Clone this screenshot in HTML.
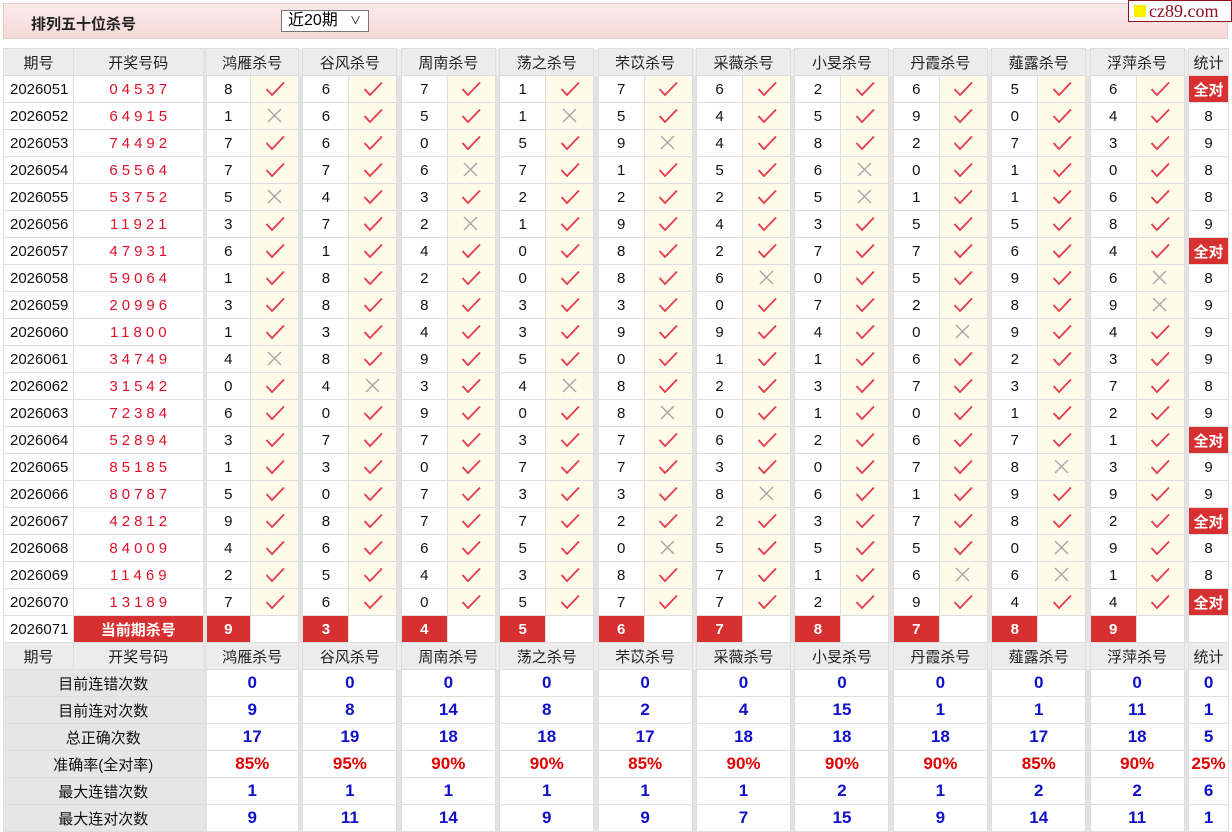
<!DOCTYPE html>
<html><head><meta charset="utf-8">
<style>
*{margin:0;padding:0;box-sizing:border-box}
body{width:1232px;height:832px;background:#fff;font-family:"Liberation Sans","Noto Sans CJK SC",sans-serif;position:relative;overflow:hidden}
.bar{position:absolute;left:3px;top:3px;width:1225px;height:36px;background:linear-gradient(#fbeaea,#f6d9d9);border:1px solid #e2cccc}
.title{position:absolute;left:27px;top:9px;font-size:15px;font-weight:bold;color:#222}
.sel{position:absolute;left:277px;top:6px;width:88px;height:22px;border:1px solid #777;background:#fff;font-size:16px;padding-left:6px;line-height:20px;color:#000}
.sel span{position:absolute;right:7px;top:0;font-size:11px}
.logo{position:absolute;left:1128px;top:0;width:104px;height:22px;background:#fff;border:1px solid #8b1020;font-family:"Liberation Serif",serif;font-size:18px;color:#8b1020;line-height:20px;padding-left:20px}
.logo:before{content:"";position:absolute;left:5px;top:4px;width:12px;height:12px;background:#ffee00}
table{position:absolute;left:3px;top:48px;border-collapse:collapse;table-layout:fixed;width:1225px}
td{height:27px;border:1px solid #dedede;text-align:center;font-size:15px;color:#111;padding:0;white-space:nowrap}
tr:not(.st) td:nth-child(2),td.lb{border-right:4px solid #e2e2e2}
tr.h td{background:#ececec;color:#222}
td.s{background:#e2e2e2;border-top:none;border-bottom:none}
td.q{text-align:left;padding-left:6px}
td.r{color:#e0102a;letter-spacing:4px;padding-left:4px}
td.c{background:#fffbea}
td.a{background:#d63030;color:#fff;font-weight:bold}
td.lb{background:#e6e6e6}
td.b{color:#1010c8;font-weight:bold;font-size:17px}
td.p{color:#e00000;font-weight:bold;font-size:17px}
svg{display:block;margin:auto}
</style></head><body>
<svg width="0" height="0" style="position:absolute"><defs>
<symbol id="k" viewBox="0 0 22 18"><path d="M2.5 9 L8 15 L20 2.5" fill="none" stroke="#e5404f" stroke-width="1.9"/></symbol>
<symbol id="x" viewBox="0 0 22 18"><path d="M4 2 L17 15 M17 2 L4 15" fill="none" stroke="#aaa" stroke-width="1.5"/></symbol>
</defs></svg>
<div class="bar"><div class="title">排列五十位杀号</div><div class="sel">近20期<span>&#x2228;</span></div></div>
<div class="logo">cz89.com</div>
<table>
<colgroup><col style="width:70px"><col style="width:131px">
<col style="width:46px"><col style="width:48px"><col style="width:4.4px">
<col style="width:46px"><col style="width:48px"><col style="width:4.4px">
<col style="width:46px"><col style="width:48px"><col style="width:4.4px">
<col style="width:46px"><col style="width:48px"><col style="width:4.4px">
<col style="width:46px"><col style="width:48px"><col style="width:4.4px">
<col style="width:46px"><col style="width:48px"><col style="width:4.4px">
<col style="width:46px"><col style="width:48px"><col style="width:4.4px">
<col style="width:46px"><col style="width:48px"><col style="width:4.4px">
<col style="width:46px"><col style="width:48px"><col style="width:4.4px">
<col style="width:46px"><col style="width:48px"><col style="width:4.4px">
<col style="width:40px"></colgroup>
<tr class="h"><td>期号</td><td>开奖号码</td><td colspan="2">鸿雁杀号</td><td class="s"></td><td colspan="2">谷风杀号</td><td class="s"></td><td colspan="2">周南杀号</td><td class="s"></td><td colspan="2">荡之杀号</td><td class="s"></td><td colspan="2">芣苡杀号</td><td class="s"></td><td colspan="2">采薇杀号</td><td class="s"></td><td colspan="2">小旻杀号</td><td class="s"></td><td colspan="2">丹霞杀号</td><td class="s"></td><td colspan="2">薤露杀号</td><td class="s"></td><td colspan="2">浮萍杀号</td><td class="s"></td><td>统计</td></tr>
<tr><td class="q">2026051</td><td class="r">04537</td><td>8</td><td class="c"><svg width="22" height="18"><use href="#k"/></svg></td><td class="s"></td><td>6</td><td class="c"><svg width="22" height="18"><use href="#k"/></svg></td><td class="s"></td><td>7</td><td class="c"><svg width="22" height="18"><use href="#k"/></svg></td><td class="s"></td><td>1</td><td class="c"><svg width="22" height="18"><use href="#k"/></svg></td><td class="s"></td><td>7</td><td class="c"><svg width="22" height="18"><use href="#k"/></svg></td><td class="s"></td><td>6</td><td class="c"><svg width="22" height="18"><use href="#k"/></svg></td><td class="s"></td><td>2</td><td class="c"><svg width="22" height="18"><use href="#k"/></svg></td><td class="s"></td><td>6</td><td class="c"><svg width="22" height="18"><use href="#k"/></svg></td><td class="s"></td><td>5</td><td class="c"><svg width="22" height="18"><use href="#k"/></svg></td><td class="s"></td><td>6</td><td class="c"><svg width="22" height="18"><use href="#k"/></svg></td><td class="s"></td><td class="a">全对</td></tr>
<tr><td class="q">2026052</td><td class="r">64915</td><td>1</td><td class="c"><svg width="22" height="18"><use href="#x"/></svg></td><td class="s"></td><td>6</td><td class="c"><svg width="22" height="18"><use href="#k"/></svg></td><td class="s"></td><td>5</td><td class="c"><svg width="22" height="18"><use href="#k"/></svg></td><td class="s"></td><td>1</td><td class="c"><svg width="22" height="18"><use href="#x"/></svg></td><td class="s"></td><td>5</td><td class="c"><svg width="22" height="18"><use href="#k"/></svg></td><td class="s"></td><td>4</td><td class="c"><svg width="22" height="18"><use href="#k"/></svg></td><td class="s"></td><td>5</td><td class="c"><svg width="22" height="18"><use href="#k"/></svg></td><td class="s"></td><td>9</td><td class="c"><svg width="22" height="18"><use href="#k"/></svg></td><td class="s"></td><td>0</td><td class="c"><svg width="22" height="18"><use href="#k"/></svg></td><td class="s"></td><td>4</td><td class="c"><svg width="22" height="18"><use href="#k"/></svg></td><td class="s"></td><td>8</td></tr>
<tr><td class="q">2026053</td><td class="r">74492</td><td>7</td><td class="c"><svg width="22" height="18"><use href="#k"/></svg></td><td class="s"></td><td>6</td><td class="c"><svg width="22" height="18"><use href="#k"/></svg></td><td class="s"></td><td>0</td><td class="c"><svg width="22" height="18"><use href="#k"/></svg></td><td class="s"></td><td>5</td><td class="c"><svg width="22" height="18"><use href="#k"/></svg></td><td class="s"></td><td>9</td><td class="c"><svg width="22" height="18"><use href="#x"/></svg></td><td class="s"></td><td>4</td><td class="c"><svg width="22" height="18"><use href="#k"/></svg></td><td class="s"></td><td>8</td><td class="c"><svg width="22" height="18"><use href="#k"/></svg></td><td class="s"></td><td>2</td><td class="c"><svg width="22" height="18"><use href="#k"/></svg></td><td class="s"></td><td>7</td><td class="c"><svg width="22" height="18"><use href="#k"/></svg></td><td class="s"></td><td>3</td><td class="c"><svg width="22" height="18"><use href="#k"/></svg></td><td class="s"></td><td>9</td></tr>
<tr><td class="q">2026054</td><td class="r">65564</td><td>7</td><td class="c"><svg width="22" height="18"><use href="#k"/></svg></td><td class="s"></td><td>7</td><td class="c"><svg width="22" height="18"><use href="#k"/></svg></td><td class="s"></td><td>6</td><td class="c"><svg width="22" height="18"><use href="#x"/></svg></td><td class="s"></td><td>7</td><td class="c"><svg width="22" height="18"><use href="#k"/></svg></td><td class="s"></td><td>1</td><td class="c"><svg width="22" height="18"><use href="#k"/></svg></td><td class="s"></td><td>5</td><td class="c"><svg width="22" height="18"><use href="#k"/></svg></td><td class="s"></td><td>6</td><td class="c"><svg width="22" height="18"><use href="#x"/></svg></td><td class="s"></td><td>0</td><td class="c"><svg width="22" height="18"><use href="#k"/></svg></td><td class="s"></td><td>1</td><td class="c"><svg width="22" height="18"><use href="#k"/></svg></td><td class="s"></td><td>0</td><td class="c"><svg width="22" height="18"><use href="#k"/></svg></td><td class="s"></td><td>8</td></tr>
<tr><td class="q">2026055</td><td class="r">53752</td><td>5</td><td class="c"><svg width="22" height="18"><use href="#x"/></svg></td><td class="s"></td><td>4</td><td class="c"><svg width="22" height="18"><use href="#k"/></svg></td><td class="s"></td><td>3</td><td class="c"><svg width="22" height="18"><use href="#k"/></svg></td><td class="s"></td><td>2</td><td class="c"><svg width="22" height="18"><use href="#k"/></svg></td><td class="s"></td><td>2</td><td class="c"><svg width="22" height="18"><use href="#k"/></svg></td><td class="s"></td><td>2</td><td class="c"><svg width="22" height="18"><use href="#k"/></svg></td><td class="s"></td><td>5</td><td class="c"><svg width="22" height="18"><use href="#x"/></svg></td><td class="s"></td><td>1</td><td class="c"><svg width="22" height="18"><use href="#k"/></svg></td><td class="s"></td><td>1</td><td class="c"><svg width="22" height="18"><use href="#k"/></svg></td><td class="s"></td><td>6</td><td class="c"><svg width="22" height="18"><use href="#k"/></svg></td><td class="s"></td><td>8</td></tr>
<tr><td class="q">2026056</td><td class="r">11921</td><td>3</td><td class="c"><svg width="22" height="18"><use href="#k"/></svg></td><td class="s"></td><td>7</td><td class="c"><svg width="22" height="18"><use href="#k"/></svg></td><td class="s"></td><td>2</td><td class="c"><svg width="22" height="18"><use href="#x"/></svg></td><td class="s"></td><td>1</td><td class="c"><svg width="22" height="18"><use href="#k"/></svg></td><td class="s"></td><td>9</td><td class="c"><svg width="22" height="18"><use href="#k"/></svg></td><td class="s"></td><td>4</td><td class="c"><svg width="22" height="18"><use href="#k"/></svg></td><td class="s"></td><td>3</td><td class="c"><svg width="22" height="18"><use href="#k"/></svg></td><td class="s"></td><td>5</td><td class="c"><svg width="22" height="18"><use href="#k"/></svg></td><td class="s"></td><td>5</td><td class="c"><svg width="22" height="18"><use href="#k"/></svg></td><td class="s"></td><td>8</td><td class="c"><svg width="22" height="18"><use href="#k"/></svg></td><td class="s"></td><td>9</td></tr>
<tr><td class="q">2026057</td><td class="r">47931</td><td>6</td><td class="c"><svg width="22" height="18"><use href="#k"/></svg></td><td class="s"></td><td>1</td><td class="c"><svg width="22" height="18"><use href="#k"/></svg></td><td class="s"></td><td>4</td><td class="c"><svg width="22" height="18"><use href="#k"/></svg></td><td class="s"></td><td>0</td><td class="c"><svg width="22" height="18"><use href="#k"/></svg></td><td class="s"></td><td>8</td><td class="c"><svg width="22" height="18"><use href="#k"/></svg></td><td class="s"></td><td>2</td><td class="c"><svg width="22" height="18"><use href="#k"/></svg></td><td class="s"></td><td>7</td><td class="c"><svg width="22" height="18"><use href="#k"/></svg></td><td class="s"></td><td>7</td><td class="c"><svg width="22" height="18"><use href="#k"/></svg></td><td class="s"></td><td>6</td><td class="c"><svg width="22" height="18"><use href="#k"/></svg></td><td class="s"></td><td>4</td><td class="c"><svg width="22" height="18"><use href="#k"/></svg></td><td class="s"></td><td class="a">全对</td></tr>
<tr><td class="q">2026058</td><td class="r">59064</td><td>1</td><td class="c"><svg width="22" height="18"><use href="#k"/></svg></td><td class="s"></td><td>8</td><td class="c"><svg width="22" height="18"><use href="#k"/></svg></td><td class="s"></td><td>2</td><td class="c"><svg width="22" height="18"><use href="#k"/></svg></td><td class="s"></td><td>0</td><td class="c"><svg width="22" height="18"><use href="#k"/></svg></td><td class="s"></td><td>8</td><td class="c"><svg width="22" height="18"><use href="#k"/></svg></td><td class="s"></td><td>6</td><td class="c"><svg width="22" height="18"><use href="#x"/></svg></td><td class="s"></td><td>0</td><td class="c"><svg width="22" height="18"><use href="#k"/></svg></td><td class="s"></td><td>5</td><td class="c"><svg width="22" height="18"><use href="#k"/></svg></td><td class="s"></td><td>9</td><td class="c"><svg width="22" height="18"><use href="#k"/></svg></td><td class="s"></td><td>6</td><td class="c"><svg width="22" height="18"><use href="#x"/></svg></td><td class="s"></td><td>8</td></tr>
<tr><td class="q">2026059</td><td class="r">20996</td><td>3</td><td class="c"><svg width="22" height="18"><use href="#k"/></svg></td><td class="s"></td><td>8</td><td class="c"><svg width="22" height="18"><use href="#k"/></svg></td><td class="s"></td><td>8</td><td class="c"><svg width="22" height="18"><use href="#k"/></svg></td><td class="s"></td><td>3</td><td class="c"><svg width="22" height="18"><use href="#k"/></svg></td><td class="s"></td><td>3</td><td class="c"><svg width="22" height="18"><use href="#k"/></svg></td><td class="s"></td><td>0</td><td class="c"><svg width="22" height="18"><use href="#k"/></svg></td><td class="s"></td><td>7</td><td class="c"><svg width="22" height="18"><use href="#k"/></svg></td><td class="s"></td><td>2</td><td class="c"><svg width="22" height="18"><use href="#k"/></svg></td><td class="s"></td><td>8</td><td class="c"><svg width="22" height="18"><use href="#k"/></svg></td><td class="s"></td><td>9</td><td class="c"><svg width="22" height="18"><use href="#x"/></svg></td><td class="s"></td><td>9</td></tr>
<tr><td class="q">2026060</td><td class="r">11800</td><td>1</td><td class="c"><svg width="22" height="18"><use href="#k"/></svg></td><td class="s"></td><td>3</td><td class="c"><svg width="22" height="18"><use href="#k"/></svg></td><td class="s"></td><td>4</td><td class="c"><svg width="22" height="18"><use href="#k"/></svg></td><td class="s"></td><td>3</td><td class="c"><svg width="22" height="18"><use href="#k"/></svg></td><td class="s"></td><td>9</td><td class="c"><svg width="22" height="18"><use href="#k"/></svg></td><td class="s"></td><td>9</td><td class="c"><svg width="22" height="18"><use href="#k"/></svg></td><td class="s"></td><td>4</td><td class="c"><svg width="22" height="18"><use href="#k"/></svg></td><td class="s"></td><td>0</td><td class="c"><svg width="22" height="18"><use href="#x"/></svg></td><td class="s"></td><td>9</td><td class="c"><svg width="22" height="18"><use href="#k"/></svg></td><td class="s"></td><td>4</td><td class="c"><svg width="22" height="18"><use href="#k"/></svg></td><td class="s"></td><td>9</td></tr>
<tr><td class="q">2026061</td><td class="r">34749</td><td>4</td><td class="c"><svg width="22" height="18"><use href="#x"/></svg></td><td class="s"></td><td>8</td><td class="c"><svg width="22" height="18"><use href="#k"/></svg></td><td class="s"></td><td>9</td><td class="c"><svg width="22" height="18"><use href="#k"/></svg></td><td class="s"></td><td>5</td><td class="c"><svg width="22" height="18"><use href="#k"/></svg></td><td class="s"></td><td>0</td><td class="c"><svg width="22" height="18"><use href="#k"/></svg></td><td class="s"></td><td>1</td><td class="c"><svg width="22" height="18"><use href="#k"/></svg></td><td class="s"></td><td>1</td><td class="c"><svg width="22" height="18"><use href="#k"/></svg></td><td class="s"></td><td>6</td><td class="c"><svg width="22" height="18"><use href="#k"/></svg></td><td class="s"></td><td>2</td><td class="c"><svg width="22" height="18"><use href="#k"/></svg></td><td class="s"></td><td>3</td><td class="c"><svg width="22" height="18"><use href="#k"/></svg></td><td class="s"></td><td>9</td></tr>
<tr><td class="q">2026062</td><td class="r">31542</td><td>0</td><td class="c"><svg width="22" height="18"><use href="#k"/></svg></td><td class="s"></td><td>4</td><td class="c"><svg width="22" height="18"><use href="#x"/></svg></td><td class="s"></td><td>3</td><td class="c"><svg width="22" height="18"><use href="#k"/></svg></td><td class="s"></td><td>4</td><td class="c"><svg width="22" height="18"><use href="#x"/></svg></td><td class="s"></td><td>8</td><td class="c"><svg width="22" height="18"><use href="#k"/></svg></td><td class="s"></td><td>2</td><td class="c"><svg width="22" height="18"><use href="#k"/></svg></td><td class="s"></td><td>3</td><td class="c"><svg width="22" height="18"><use href="#k"/></svg></td><td class="s"></td><td>7</td><td class="c"><svg width="22" height="18"><use href="#k"/></svg></td><td class="s"></td><td>3</td><td class="c"><svg width="22" height="18"><use href="#k"/></svg></td><td class="s"></td><td>7</td><td class="c"><svg width="22" height="18"><use href="#k"/></svg></td><td class="s"></td><td>8</td></tr>
<tr><td class="q">2026063</td><td class="r">72384</td><td>6</td><td class="c"><svg width="22" height="18"><use href="#k"/></svg></td><td class="s"></td><td>0</td><td class="c"><svg width="22" height="18"><use href="#k"/></svg></td><td class="s"></td><td>9</td><td class="c"><svg width="22" height="18"><use href="#k"/></svg></td><td class="s"></td><td>0</td><td class="c"><svg width="22" height="18"><use href="#k"/></svg></td><td class="s"></td><td>8</td><td class="c"><svg width="22" height="18"><use href="#x"/></svg></td><td class="s"></td><td>0</td><td class="c"><svg width="22" height="18"><use href="#k"/></svg></td><td class="s"></td><td>1</td><td class="c"><svg width="22" height="18"><use href="#k"/></svg></td><td class="s"></td><td>0</td><td class="c"><svg width="22" height="18"><use href="#k"/></svg></td><td class="s"></td><td>1</td><td class="c"><svg width="22" height="18"><use href="#k"/></svg></td><td class="s"></td><td>2</td><td class="c"><svg width="22" height="18"><use href="#k"/></svg></td><td class="s"></td><td>9</td></tr>
<tr><td class="q">2026064</td><td class="r">52894</td><td>3</td><td class="c"><svg width="22" height="18"><use href="#k"/></svg></td><td class="s"></td><td>7</td><td class="c"><svg width="22" height="18"><use href="#k"/></svg></td><td class="s"></td><td>7</td><td class="c"><svg width="22" height="18"><use href="#k"/></svg></td><td class="s"></td><td>3</td><td class="c"><svg width="22" height="18"><use href="#k"/></svg></td><td class="s"></td><td>7</td><td class="c"><svg width="22" height="18"><use href="#k"/></svg></td><td class="s"></td><td>6</td><td class="c"><svg width="22" height="18"><use href="#k"/></svg></td><td class="s"></td><td>2</td><td class="c"><svg width="22" height="18"><use href="#k"/></svg></td><td class="s"></td><td>6</td><td class="c"><svg width="22" height="18"><use href="#k"/></svg></td><td class="s"></td><td>7</td><td class="c"><svg width="22" height="18"><use href="#k"/></svg></td><td class="s"></td><td>1</td><td class="c"><svg width="22" height="18"><use href="#k"/></svg></td><td class="s"></td><td class="a">全对</td></tr>
<tr><td class="q">2026065</td><td class="r">85185</td><td>1</td><td class="c"><svg width="22" height="18"><use href="#k"/></svg></td><td class="s"></td><td>3</td><td class="c"><svg width="22" height="18"><use href="#k"/></svg></td><td class="s"></td><td>0</td><td class="c"><svg width="22" height="18"><use href="#k"/></svg></td><td class="s"></td><td>7</td><td class="c"><svg width="22" height="18"><use href="#k"/></svg></td><td class="s"></td><td>7</td><td class="c"><svg width="22" height="18"><use href="#k"/></svg></td><td class="s"></td><td>3</td><td class="c"><svg width="22" height="18"><use href="#k"/></svg></td><td class="s"></td><td>0</td><td class="c"><svg width="22" height="18"><use href="#k"/></svg></td><td class="s"></td><td>7</td><td class="c"><svg width="22" height="18"><use href="#k"/></svg></td><td class="s"></td><td>8</td><td class="c"><svg width="22" height="18"><use href="#x"/></svg></td><td class="s"></td><td>3</td><td class="c"><svg width="22" height="18"><use href="#k"/></svg></td><td class="s"></td><td>9</td></tr>
<tr><td class="q">2026066</td><td class="r">80787</td><td>5</td><td class="c"><svg width="22" height="18"><use href="#k"/></svg></td><td class="s"></td><td>0</td><td class="c"><svg width="22" height="18"><use href="#k"/></svg></td><td class="s"></td><td>7</td><td class="c"><svg width="22" height="18"><use href="#k"/></svg></td><td class="s"></td><td>3</td><td class="c"><svg width="22" height="18"><use href="#k"/></svg></td><td class="s"></td><td>3</td><td class="c"><svg width="22" height="18"><use href="#k"/></svg></td><td class="s"></td><td>8</td><td class="c"><svg width="22" height="18"><use href="#x"/></svg></td><td class="s"></td><td>6</td><td class="c"><svg width="22" height="18"><use href="#k"/></svg></td><td class="s"></td><td>1</td><td class="c"><svg width="22" height="18"><use href="#k"/></svg></td><td class="s"></td><td>9</td><td class="c"><svg width="22" height="18"><use href="#k"/></svg></td><td class="s"></td><td>9</td><td class="c"><svg width="22" height="18"><use href="#k"/></svg></td><td class="s"></td><td>9</td></tr>
<tr><td class="q">2026067</td><td class="r">42812</td><td>9</td><td class="c"><svg width="22" height="18"><use href="#k"/></svg></td><td class="s"></td><td>8</td><td class="c"><svg width="22" height="18"><use href="#k"/></svg></td><td class="s"></td><td>7</td><td class="c"><svg width="22" height="18"><use href="#k"/></svg></td><td class="s"></td><td>7</td><td class="c"><svg width="22" height="18"><use href="#k"/></svg></td><td class="s"></td><td>2</td><td class="c"><svg width="22" height="18"><use href="#k"/></svg></td><td class="s"></td><td>2</td><td class="c"><svg width="22" height="18"><use href="#k"/></svg></td><td class="s"></td><td>3</td><td class="c"><svg width="22" height="18"><use href="#k"/></svg></td><td class="s"></td><td>7</td><td class="c"><svg width="22" height="18"><use href="#k"/></svg></td><td class="s"></td><td>8</td><td class="c"><svg width="22" height="18"><use href="#k"/></svg></td><td class="s"></td><td>2</td><td class="c"><svg width="22" height="18"><use href="#k"/></svg></td><td class="s"></td><td class="a">全对</td></tr>
<tr><td class="q">2026068</td><td class="r">84009</td><td>4</td><td class="c"><svg width="22" height="18"><use href="#k"/></svg></td><td class="s"></td><td>6</td><td class="c"><svg width="22" height="18"><use href="#k"/></svg></td><td class="s"></td><td>6</td><td class="c"><svg width="22" height="18"><use href="#k"/></svg></td><td class="s"></td><td>5</td><td class="c"><svg width="22" height="18"><use href="#k"/></svg></td><td class="s"></td><td>0</td><td class="c"><svg width="22" height="18"><use href="#x"/></svg></td><td class="s"></td><td>5</td><td class="c"><svg width="22" height="18"><use href="#k"/></svg></td><td class="s"></td><td>5</td><td class="c"><svg width="22" height="18"><use href="#k"/></svg></td><td class="s"></td><td>5</td><td class="c"><svg width="22" height="18"><use href="#k"/></svg></td><td class="s"></td><td>0</td><td class="c"><svg width="22" height="18"><use href="#x"/></svg></td><td class="s"></td><td>9</td><td class="c"><svg width="22" height="18"><use href="#k"/></svg></td><td class="s"></td><td>8</td></tr>
<tr><td class="q">2026069</td><td class="r">11469</td><td>2</td><td class="c"><svg width="22" height="18"><use href="#k"/></svg></td><td class="s"></td><td>5</td><td class="c"><svg width="22" height="18"><use href="#k"/></svg></td><td class="s"></td><td>4</td><td class="c"><svg width="22" height="18"><use href="#k"/></svg></td><td class="s"></td><td>3</td><td class="c"><svg width="22" height="18"><use href="#k"/></svg></td><td class="s"></td><td>8</td><td class="c"><svg width="22" height="18"><use href="#k"/></svg></td><td class="s"></td><td>7</td><td class="c"><svg width="22" height="18"><use href="#k"/></svg></td><td class="s"></td><td>1</td><td class="c"><svg width="22" height="18"><use href="#k"/></svg></td><td class="s"></td><td>6</td><td class="c"><svg width="22" height="18"><use href="#x"/></svg></td><td class="s"></td><td>6</td><td class="c"><svg width="22" height="18"><use href="#x"/></svg></td><td class="s"></td><td>1</td><td class="c"><svg width="22" height="18"><use href="#k"/></svg></td><td class="s"></td><td>8</td></tr>
<tr><td class="q">2026070</td><td class="r">13189</td><td>7</td><td class="c"><svg width="22" height="18"><use href="#k"/></svg></td><td class="s"></td><td>6</td><td class="c"><svg width="22" height="18"><use href="#k"/></svg></td><td class="s"></td><td>0</td><td class="c"><svg width="22" height="18"><use href="#k"/></svg></td><td class="s"></td><td>5</td><td class="c"><svg width="22" height="18"><use href="#k"/></svg></td><td class="s"></td><td>7</td><td class="c"><svg width="22" height="18"><use href="#k"/></svg></td><td class="s"></td><td>7</td><td class="c"><svg width="22" height="18"><use href="#k"/></svg></td><td class="s"></td><td>2</td><td class="c"><svg width="22" height="18"><use href="#k"/></svg></td><td class="s"></td><td>9</td><td class="c"><svg width="22" height="18"><use href="#k"/></svg></td><td class="s"></td><td>4</td><td class="c"><svg width="22" height="18"><use href="#k"/></svg></td><td class="s"></td><td>4</td><td class="c"><svg width="22" height="18"><use href="#k"/></svg></td><td class="s"></td><td class="a">全对</td></tr>
<tr><td class="q">2026071</td><td class="a">当前期杀号</td><td class="a">9</td><td></td><td class="s"></td><td class="a">3</td><td></td><td class="s"></td><td class="a">4</td><td></td><td class="s"></td><td class="a">5</td><td></td><td class="s"></td><td class="a">6</td><td></td><td class="s"></td><td class="a">7</td><td></td><td class="s"></td><td class="a">8</td><td></td><td class="s"></td><td class="a">7</td><td></td><td class="s"></td><td class="a">8</td><td></td><td class="s"></td><td class="a">9</td><td></td><td class="s"></td><td></td></tr>
<tr class="h"><td>期号</td><td>开奖号码</td><td colspan="2">鸿雁杀号</td><td class="s"></td><td colspan="2">谷风杀号</td><td class="s"></td><td colspan="2">周南杀号</td><td class="s"></td><td colspan="2">荡之杀号</td><td class="s"></td><td colspan="2">芣苡杀号</td><td class="s"></td><td colspan="2">采薇杀号</td><td class="s"></td><td colspan="2">小旻杀号</td><td class="s"></td><td colspan="2">丹霞杀号</td><td class="s"></td><td colspan="2">薤露杀号</td><td class="s"></td><td colspan="2">浮萍杀号</td><td class="s"></td><td>统计</td></tr>
<tr class="st"><td colspan="2" class="lb">目前连错次数</td><td colspan="2" class="b">0</td><td class="s"></td><td colspan="2" class="b">0</td><td class="s"></td><td colspan="2" class="b">0</td><td class="s"></td><td colspan="2" class="b">0</td><td class="s"></td><td colspan="2" class="b">0</td><td class="s"></td><td colspan="2" class="b">0</td><td class="s"></td><td colspan="2" class="b">0</td><td class="s"></td><td colspan="2" class="b">0</td><td class="s"></td><td colspan="2" class="b">0</td><td class="s"></td><td colspan="2" class="b">0</td><td class="s"></td><td class="b">0</td></tr>
<tr class="st"><td colspan="2" class="lb">目前连对次数</td><td colspan="2" class="b">9</td><td class="s"></td><td colspan="2" class="b">8</td><td class="s"></td><td colspan="2" class="b">14</td><td class="s"></td><td colspan="2" class="b">8</td><td class="s"></td><td colspan="2" class="b">2</td><td class="s"></td><td colspan="2" class="b">4</td><td class="s"></td><td colspan="2" class="b">15</td><td class="s"></td><td colspan="2" class="b">1</td><td class="s"></td><td colspan="2" class="b">1</td><td class="s"></td><td colspan="2" class="b">11</td><td class="s"></td><td class="b">1</td></tr>
<tr class="st"><td colspan="2" class="lb">总正确次数</td><td colspan="2" class="b">17</td><td class="s"></td><td colspan="2" class="b">19</td><td class="s"></td><td colspan="2" class="b">18</td><td class="s"></td><td colspan="2" class="b">18</td><td class="s"></td><td colspan="2" class="b">17</td><td class="s"></td><td colspan="2" class="b">18</td><td class="s"></td><td colspan="2" class="b">18</td><td class="s"></td><td colspan="2" class="b">18</td><td class="s"></td><td colspan="2" class="b">17</td><td class="s"></td><td colspan="2" class="b">18</td><td class="s"></td><td class="b">5</td></tr>
<tr class="st"><td colspan="2" class="lb">准确率(全对率)</td><td colspan="2" class="p">85%</td><td class="s"></td><td colspan="2" class="p">95%</td><td class="s"></td><td colspan="2" class="p">90%</td><td class="s"></td><td colspan="2" class="p">90%</td><td class="s"></td><td colspan="2" class="p">85%</td><td class="s"></td><td colspan="2" class="p">90%</td><td class="s"></td><td colspan="2" class="p">90%</td><td class="s"></td><td colspan="2" class="p">90%</td><td class="s"></td><td colspan="2" class="p">85%</td><td class="s"></td><td colspan="2" class="p">90%</td><td class="s"></td><td class="p">25%</td></tr>
<tr class="st"><td colspan="2" class="lb">最大连错次数</td><td colspan="2" class="b">1</td><td class="s"></td><td colspan="2" class="b">1</td><td class="s"></td><td colspan="2" class="b">1</td><td class="s"></td><td colspan="2" class="b">1</td><td class="s"></td><td colspan="2" class="b">1</td><td class="s"></td><td colspan="2" class="b">1</td><td class="s"></td><td colspan="2" class="b">2</td><td class="s"></td><td colspan="2" class="b">1</td><td class="s"></td><td colspan="2" class="b">2</td><td class="s"></td><td colspan="2" class="b">2</td><td class="s"></td><td class="b">6</td></tr>
<tr class="st"><td colspan="2" class="lb">最大连对次数</td><td colspan="2" class="b">9</td><td class="s"></td><td colspan="2" class="b">11</td><td class="s"></td><td colspan="2" class="b">14</td><td class="s"></td><td colspan="2" class="b">9</td><td class="s"></td><td colspan="2" class="b">9</td><td class="s"></td><td colspan="2" class="b">7</td><td class="s"></td><td colspan="2" class="b">15</td><td class="s"></td><td colspan="2" class="b">9</td><td class="s"></td><td colspan="2" class="b">14</td><td class="s"></td><td colspan="2" class="b">11</td><td class="s"></td><td class="b">1</td></tr>
</table>
</body></html>
